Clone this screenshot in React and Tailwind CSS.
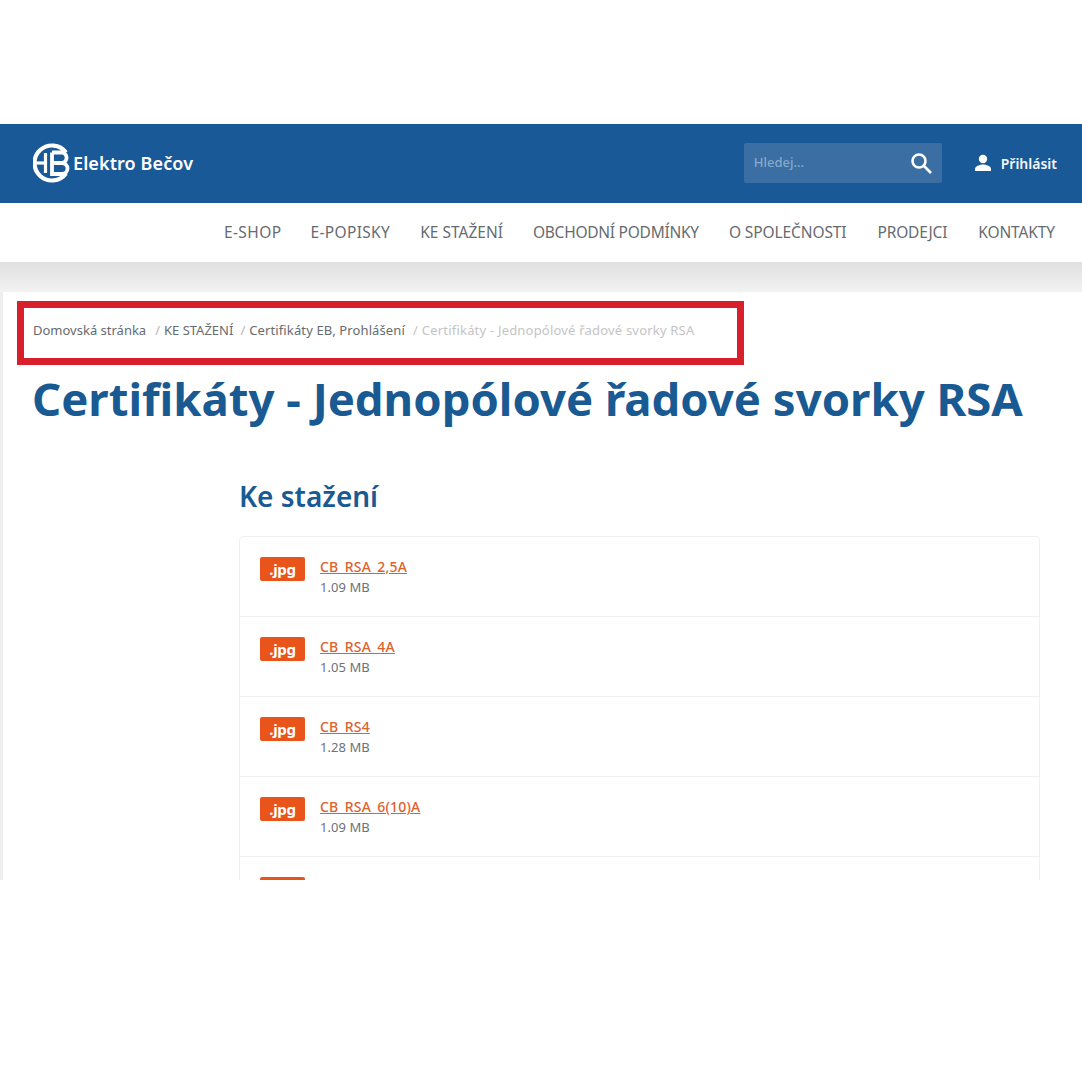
function Logo() {
  return (
    <svg width="40" height="42" viewBox="0 0 40 42" fill="none" stroke="#fff" className="shrink-0">
      <path d="M33 10.500A17.500 17.500 0 1 0 33 31.500" strokeWidth="4.200" />
      <path d="M2 21H12" strokeWidth="3.200" />
      <path d="M12.500 11V31" strokeWidth="3.200" />
      <path d="M19 10.500H29a5.300 5.300 0 0 1 0 10.500H20M29 21a5.500 5.500 0 0 1 0 11H19V10.500" strokeWidth="3.800" />
    </svg>
  );
}

const nav = [
  ["E-SHOP", "-mr-[1px] tracking-[0.4px]"],
  ["E-POPISKY", "tracking-[0.35px]"],
  ["KE STAŽENÍ", "tracking-[0px]"],
  ["OBCHODNÍ PODMÍNKY", "tracking-[-0.25px]"],
  ["O SPOLEČNOSTI", "mr-[1px] tracking-[-0.1px]"],
  ["PRODEJCI", "mr-[1px] tracking-[-0.2px]"],
  ["KONTAKTY", "tracking-[-0.1px]"],
];
const files = [
  ["CB_RSA_2,5A", "1.09 MB"],
  ["CB_RSA_4A", "1.05 MB"],
  ["CB_RS4", "1.28 MB"],
  ["CB_RSA_6(10)A", "1.09 MB"],
];

function Badge({ label }) {
  return (
    <span className="flex h-6 w-[45px] shrink-0 items-center justify-center rounded-[2px] bg-[#e9541a] text-[15px] font-bold leading-none tracking-[-0.3px] text-[#fff]">
      {label}
    </span>
  );
}

export default function App() {
  return (
    <div className="relative h-[1080px] w-[1082px] overflow-hidden bg-white font-['Noto_Sans',sans-serif]">
      <div className="h-[124px]" />
      <header className="flex h-[79px] items-center justify-between bg-[#195997] pb-[1px] pl-[33px] pr-[25px]">
        <div className="flex items-center">
          <Logo />
          <span className="text-[18px] font-semibold tracking-[0.1px] text-white">Elektro Bečov</span>
        </div>
        <div className="flex items-center">
          <div className="flex h-10 w-[198px] items-center justify-between rounded-[2px] bg-[#3b6ea2] pl-[10px] pr-[9px]">
            <span className="text-[13px] font-medium text-[#86a9cc]">Hledej...</span>
            <svg width="24" height="24" viewBox="0 0 24 24" fill="none" stroke="#fff" strokeWidth="2.600">
              <circle cx="10" cy="10" r="6.500" />
              <path d="M15 15l7 7" />
            </svg>
          </div>
          <svg className="ml-[31px]" width="20" height="20" viewBox="0 0 20 20" fill="#fff">
            <circle cx="10" cy="6" r="4.200" />
            <path d="M2 18v-2c0-3 5-4.500 8-4.500s8 1.500 8 4.500v2z" />
          </svg>
          <span className="ml-[8px] text-[14px] font-semibold text-[#f2f6fa]">Přihlásit</span>
        </div>
      </header>
      <nav className="flex h-[59px] items-center justify-end gap-[30px] pr-[27px] text-[15.500px] text-[#666b70]">
        {nav.map(([n, t]) => (
          <span key={n} className={t}>{n}</span>
        ))}
      </nav>
      <div className="h-[30px] bg-gradient-to-b from-[#e0e0e0] to-[#f2f2f2]" />
      <main className="h-[588px] overflow-hidden border-l-[3px] border-[#eeeeee] bg-white">
        <div className="flex items-center pl-[30px] pt-[28px] text-[13px] leading-[20px] text-[#666b70]">
          <span>Domovská stránka</span>
          <span className="ml-[9px] mr-[4px] text-[#b5b5b5]">/</span>
          <span>KE STAŽENÍ</span>
          <span className="ml-[7px] mr-[4px] text-[#b5b5b5]">/</span>
          <span className="tracking-[0.12px]">Certifikáty EB, Prohlášení</span>
          <span className="ml-[8px] mr-[4px] text-[#c4c4c4]">/</span>
          <span className="tracking-[0.2px] text-[#c4c4c4]">Certifikáty - Jednopólové řadové svorky RSA</span>
        </div>
        <h1 className="mt-[27px] whitespace-nowrap pl-[29px] text-[45.500px] font-bold leading-[62px] text-[#195a93]">
          Certifikáty - Jednopólové řadové svorky RSA
        </h1>
        <div className="ml-[236px] mr-[42px] mt-[47px]">
          <h2 className="text-[28px] font-semibold leading-[40px] text-[#195a93]">Ke stažení</h2>
          <ul className="mt-[20px] rounded-[4px] border border-[#f0f0f0]">
            {[...files, ["", ""]].map(([name, size], i) => (
              <li key={i} className="flex h-[80px] gap-[15px] border-b border-[#f0f0f0] pl-[20px] pt-[20px]">
                <Badge label={name ? ".jpg" : ""} />
                {name && (
                  <div className="flex flex-col">
                    <span className="text-[14px] font-medium leading-[20px] tracking-[0.2px] text-[#e0602c] underline">{name}</span>
                    <span className="text-[13px] leading-[20px] tracking-[0.05px] text-[#6b7278]">{size}</span>
                  </div>
                )}
              </li>
            ))}
          </ul>
        </div>
      </main>
      <div className="pointer-events-none absolute left-[17px] top-[301px] h-[64px] w-[727px] border-[7px] border-[#d8202c]" />
    </div>
  );
}
